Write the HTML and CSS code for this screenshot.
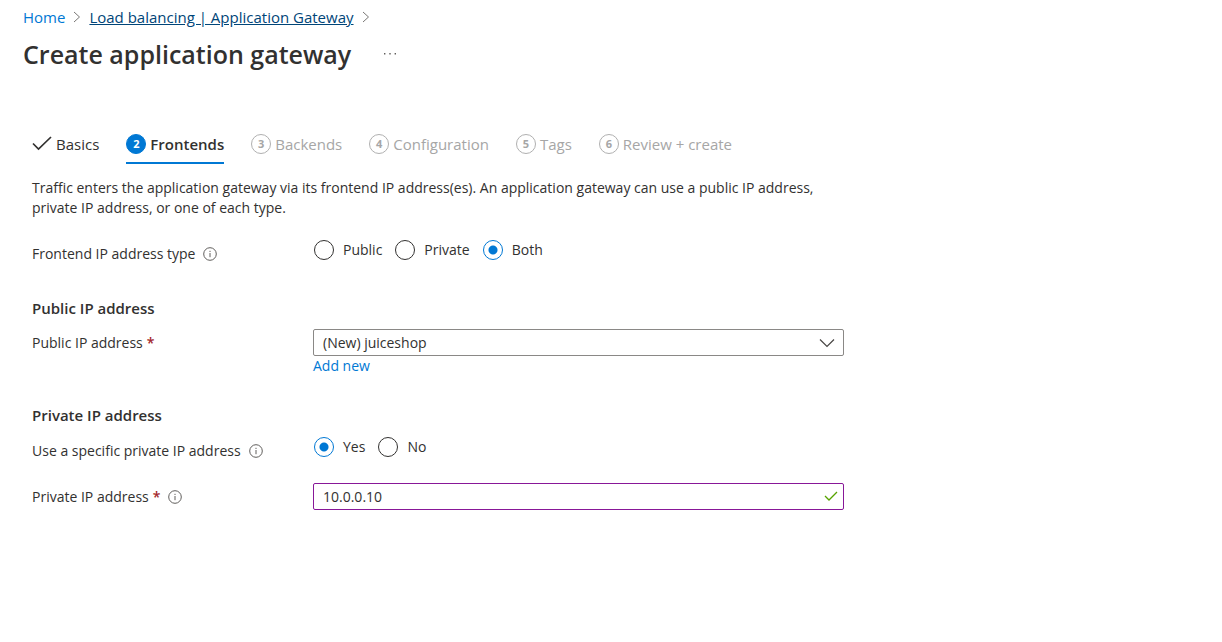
FILE: index.html
```html
<!DOCTYPE html>
<html lang="en">
<head>
<meta charset="utf-8">
<meta name="viewport" content="width=device-width, initial-scale=1">
<title>Create application gateway</title>
<link rel="stylesheet" href="styles.css">
</head>
<body>
<svg class="sprite">
  <symbol id="info" viewBox="0 0 14 14"><circle cx="7" cy="7" r="6.3" fill="none" stroke="currentColor"/><path d="M7 6v4.2M7 3.8v1.2" fill="none" stroke="currentColor"/></symbol>
  <symbol id="chevron" viewBox="0 0 8 12"><path d="M1 1l5.500 5L1 11" fill="none" stroke="currentColor"/></symbol>
</svg>
<header class="page-header">
  <nav class="breadcrumb" aria-label="Breadcrumb">
    <a class="crumb" href="#">Home</a>
    <svg class="crumb-sep" aria-hidden="true"><use href="#chevron"/></svg>
    <a class="crumb crumb-hover" href="#">Load balancing | Application Gateway</a>
    <svg class="crumb-sep" aria-hidden="true"><use href="#chevron"/></svg>
  </nav>
  <div class="title-row">
    <h1 class="title">Create application gateway</h1>
    <button class="more" type="button" aria-label="More actions"><svg width="14" height="2" viewBox="0 0 14 2" aria-hidden="true"><path d="M1 0h1.400v1.400H1zM6.300 0h1.400v1.400H6.300zM11.600 0h1.400v1.400h-1.400z" fill="#605e5c"/></svg></button>
  </div>
</header>
<main class="content">
  <div class="steps" role="tablist">
    <button class="step step-done" type="button" role="tab"><svg width="20" height="16" viewBox="0 0 20 16" aria-hidden="true"><path d="M1 7.500l5.500 5.500L19 1" fill="none" stroke="#323130" stroke-width="1.700"/></svg>Basics</button>
    <button class="step step-active" type="button" role="tab" aria-selected="true"><span class="num">2</span>Frontends</button>
    <button class="step" type="button" role="tab"><span class="num">3</span>Backends</button>
    <button class="step" type="button" role="tab"><span class="num">4</span>Configuration</button>
    <button class="step" type="button" role="tab"><span class="num">5</span>Tags</button>
    <button class="step" type="button" role="tab"><span class="num">6</span>Review + create</button>
  </div>
  <form class="form">
    <p class="intro">Traffic enters the application gateway via its frontend IP address(es). An application gateway can use a public IP address, private IP address, or one of each type.</p>
    <div class="row row-type">
      <div class="label" id="type-label">Frontend IP address type <svg class="info" aria-hidden="true"><use href="#info"/></svg></div>
      <div class="radios" role="radiogroup" aria-labelledby="type-label">
        <label class="radio"><input type="radio" name="type">Public</label>
        <label class="radio"><input type="radio" name="type">Private</label>
        <label class="radio"><input type="radio" name="type" checked>Both</label>
      </div>
    </div>
    <h2 class="section">Public IP address</h2>
    <div class="row row-public">
      <label class="label" for="public-ip">Public IP address <span class="required">*</span></label>
      <div class="field">
        <div class="control">
          <select class="box" id="public-ip"><option>(New) juiceshop</option></select>
          <svg class="mark" width="16" height="10" viewBox="0 0 16 10" aria-hidden="true"><path d="M1 1.500l7 7 7-7" fill="none" stroke="#484644" stroke-width="1.200"/></svg>
        </div>
        <a class="add-new" href="#">Add new</a>
      </div>
    </div>
    <h2 class="section">Private IP address</h2>
    <div class="row row-specific">
      <div class="label" id="specific-label">Use a specific private IP address <svg class="info" aria-hidden="true"><use href="#info"/></svg></div>
      <div class="radios" role="radiogroup" aria-labelledby="specific-label">
        <label class="radio"><input type="radio" name="specific" checked>Yes</label>
        <label class="radio"><input type="radio" name="specific">No</label>
      </div>
    </div>
    <div class="row">
      <label class="label" for="private-ip">Private IP address <span class="required">*</span> <svg class="info" aria-hidden="true"><use href="#info"/></svg></label>
      <div class="control">
        <input class="box box-edited" id="private-ip" type="text" value="10.0.0.10">
        <svg class="mark mark-valid" width="14" height="10" viewBox="0 0 14 10" aria-hidden="true"><path d="M1 5l4 4 8-8" fill="none" stroke="#57a300" stroke-width="1.300"/></svg>
      </div>
    </div>
  </form>
</main>
</body>
</html>
```
FILE: styles.css
```css
* { box-sizing: border-box; }
body {
  margin: 0;
  background: #fff;
  color: #323130;
  font: 14px/20px "Open Sans", "Noto Sans", sans-serif;
}
button, input, select { font: inherit; color: inherit; }
a { color: #0078d4; text-decoration: none; }
h1, h2, p { margin: 0; }
.sprite { display: none; }

.page-header { padding: 7px 23px 0; }
.breadcrumb { display: flex; align-items: center; gap: 8px; font-size: 15px; }
.crumb-hover { color: #004578; text-decoration: underline; }
.crumb-sep { width: 8px; height: 12px; color: #797775; }
.title-row { display: flex; align-items: center; gap: 32px; margin-top: 9px; }
.title { font-size: 25px; line-height: 36px; font-weight: 600; }
.more { display: flex; padding: 4px 0; border: 0; background: none; }

.content { padding: 56px 32px 0; }
.steps { display: flex; flex-wrap: wrap; gap: 27px; }
.step {
  display: flex;
  align-items: center;
  gap: 4px;
  height: 36px;
  padding: 0 0 2px;
  border: 0;
  border-bottom: 2px solid transparent;
  background: none;
  color: #a6a6a6;
  font-size: 15px;
}
.step-done { color: #323130; }
.step-active { border-color: #0078d4; color: #323130; font-weight: 600; }
.num {
  width: 20px;
  height: 20px;
  border: 1px solid #b0b0b0;
  border-radius: 50%;
  font-size: 11px;
  line-height: 18px;
  font-weight: 700;
  text-align: center;
}
.step-active .num { border-color: #0078d4; background: #0078d4; color: #fff; }

.form { max-width: 812px; }
.intro { padding-top: 14px; }
.row { display: grid; grid-template-columns: 281px minmax(0, 1fr); align-items: start; }
.label { display: flex; align-items: center; gap: 4px; padding-top: 4px; }
.info { width: 14px; height: 14px; margin-left: 4px; color: #605e5c; }
.required { color: #a4262c; font-weight: 600; }
.row-type { margin: 22px 0 34px; }
.section { font-size: 15px; line-height: 20px; font-weight: 600; }
.row-public { margin: 11px 0 29px; }
.row-specific { margin: 12px 0 22px; }

.radios { display: flex; gap: 12px; }
.radio { display: flex; align-items: center; gap: 9px; }
.radio input {
  appearance: none;
  width: 20px;
  height: 20px;
  margin: 0 0 0 1px;
  border: 1px solid #323130;
  border-radius: 50%;
}
.radio input:checked {
  border-color: #0078d4;
  background: radial-gradient(circle, #0078d4 4px, transparent 5px);
}

.control { position: relative; }
.box {
  display: block;
  appearance: none;
  width: 100%;
  height: 27px;
  padding: 0 32px 0 9px;
  border: 1px solid #8a8886;
  border-radius: 2px;
  background: #fff;
}
.box-edited { border-color: #881798; }
.mark { position: absolute; right: 9px; top: 9px; pointer-events: none; }
.mark-valid { right: 6px; top: 8px; }
.add-new { display: inline-block; }
```
